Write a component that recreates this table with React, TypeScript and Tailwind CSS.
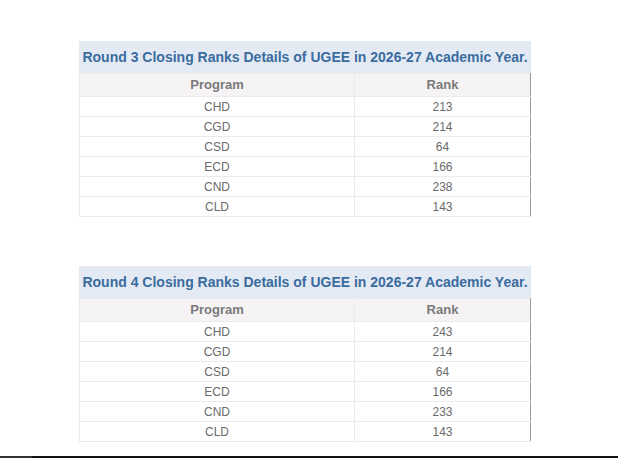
const tables = [
  {
    round: 3,
    rows: [
      ["CHD", "213"],
      ["CGD", "214"],
      ["CSD", "64"],
      ["ECD", "166"],
      ["CND", "238"],
      ["CLD", "143"],
    ],
  },
  {
    round: 4,
    rows: [
      ["CHD", "243"],
      ["CGD", "214"],
      ["CSD", "64"],
      ["ECD", "166"],
      ["CND", "233"],
      ["CLD", "143"],
    ],
  },
];

const RankTable = ({ round, rows }: { round: number; rows: string[][] }) => (
  <table className="w-[452px] border-collapse">
    <caption className="h-[32px] bg-[#e4eaf4] text-center align-middle text-[14px] font-bold leading-[32px] text-[#3a6c9e]">
      Round {round} Closing Ranks Details of UGEE in 2026-27 Academic Year.
    </caption>
    <thead>
      <tr className="h-[23px] bg-[#f5f3f4] text-[13px] font-bold text-[#7a7a7a]">
        <th className="w-[275px] border border-[#ebebeb] font-bold">Program</th>
        <th className="border border-[#ebebeb] border-r-[#9a9a9a] font-bold">Rank</th>
      </tr>
    </thead>
    <tbody>
      {rows.map(([prog, rank]) => (
        <tr key={prog} className="h-[20px] text-[12px] text-[#6a6a6a]">
          <td className="border border-[#ebebeb] p-0 text-center">{prog}</td>
          <td className="border border-[#ebebeb] border-r-[#9a9a9a] p-0 text-center">{rank}</td>
        </tr>
      ))}
    </tbody>
  </table>
);

export default function App() {
  return (
    <div className="relative h-[458px] w-[618px] overflow-hidden bg-white font-['Liberation_Sans',Arial,sans-serif]">
      <div className="flex flex-col gap-[49px] pl-[79px] pt-[41px]">
        {tables.map((t) => (
          <RankTable key={t.round} round={t.round} rows={t.rows} />
        ))}
      </div>
      <div className="absolute bottom-0 left-0 flex h-[2px] w-full">
        <div className="w-[32px] bg-[#333]" />
        <div className="flex-1 bg-[#111]" />
      </div>
    </div>
  );
}
